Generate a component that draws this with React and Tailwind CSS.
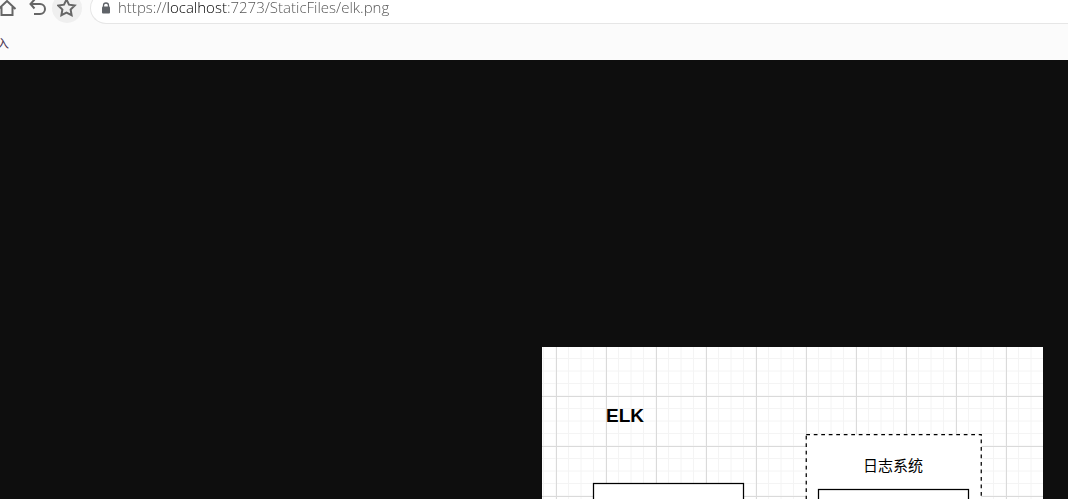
const gridX = Array.from({ length: 40 }, (_, i) => 1.5 + i * 12.5);
const gridY = Array.from({ length: 12 }, (_, i) => 11.5 + i * 12.5);

function Diagram() {
  return (
    <svg width="501" height="152" viewBox="0 0 501 152" role="img" aria-label="elk.png" className="block shrink-0 bg-white">
      <g stroke="#f4f4f4">
        {gridX.map((x) => <path key={x} d={`M${x} 0V152`} />)}
        {gridY.map((y) => <path key={y} d={`M0 ${y}H501`} />)}
      </g>
      <g stroke="#dadada">
        {Array.from({ length: 10 }, (_, i) => <path key={i} d={`M${14.5 + i * 50} 0V152`} />)}
        {[49.5, 99.5, 149.5].map((y) => <path key={y} d={`M0 ${y}H501`} />)}
      </g>
      <g fill="#fff" stroke="#000" strokeWidth="1.25">
        <rect x="51.5" y="136.5" width="150" height="60" />
        <rect x="264.25" y="87.5" width="175" height="120" strokeDasharray="3.75 3.75" />
        <rect x="276.5" y="142.5" width="150" height="60" />
      </g>
      <text x="64" y="75" className="font-['Liberation_Sans',sans-serif] text-[19px] font-bold">ELK</text>
      <text x="351" y="124" textAnchor="middle" className="font-['Noto_Sans_CJK_SC',sans-serif] text-[15px]">日志系统</text>
    </svg>
  );
}

export default function App() {
  return (
    <div className="flex min-h-screen flex-col overflow-hidden bg-[#0e0e0e]">
      <header className="h-[60px] overflow-hidden bg-[#fbfbfb]">
        <div className="-mt-2 flex h-8 items-center text-[#666]">
          <button aria-label="Home" className="-ml-2 grid size-[30px] place-items-center">
            <svg width="20" height="20" viewBox="0 0 20 20" fill="none" stroke="currentColor" strokeWidth="2">
              <path d="M1.500 11 10 3l8.500 8M4.500 9v8h11V9" />
            </svg>
          </button>
          <button aria-label="Back" className="grid size-[30px] place-items-center">
            <svg width="20" height="20" viewBox="0 0 20 20" fill="none" stroke="currentColor" strokeWidth="2">
              <path d="M7.500 1.500 3.500 6 7.500 10.500M3.500 6H13a5 5 0 0 1 0 10H7" />
            </svg>
          </button>
          <button aria-label="Favorite" className="grid size-[30px] place-items-center rounded-full bg-[#efefef]">
            <svg width="20" height="20" viewBox="0 0 20 20" fill="none" stroke="currentColor" strokeWidth="2">
              <path d="m9.500 1.500 2.500 5.200 5.700.8-4.100 4 1 5.600-5.100-2.600-5.100 2.600 1-5.600-4.100-4 5.700-.8z" />
            </svg>
          </button>
          <div className="ml-2 flex h-8 flex-1 items-center gap-[7px] rounded-l-full border border-r-0 border-[#e6e6e6] bg-white pl-2.5">
            <svg width="10" height="12" viewBox="0 0 10 12" className="shrink-0" fill="none">
              <rect x="1" y="4.500" width="8" height="7" rx="1" fill="#5f6368" />
              <path d="M2.500 5V3.500a2.500 2.500 0 0 1 5 0V5" stroke="#5f6368" strokeWidth="1.300" />
            </svg>
            <input
              aria-label="Address"
              defaultValue="https://localhost:7273/StaticFiles/elk.png"
              spellCheck={false}
              className="min-w-0 flex-1 bg-[linear-gradient(90deg,#505050_49px,#000_49px,#000_109px,#505050_109px)] bg-clip-text pb-0.5 font-['Open_Sans',sans-serif] text-[15px] leading-6 font-light text-transparent caret-black outline-none"
            />
          </div>
        </div>
        <nav className="flex h-9 items-center pt-0.5">
          <a href="#import" className="-ml-[3px] font-['Noto_Sans_CJK_SC',sans-serif] text-[12px] leading-4 text-[#4a3550]">入</a>
        </nav>
      </header>
      <main className="flex flex-1 justify-end pt-[287px] pr-[25px]">
        <Diagram />
      </main>
    </div>
  );
}
